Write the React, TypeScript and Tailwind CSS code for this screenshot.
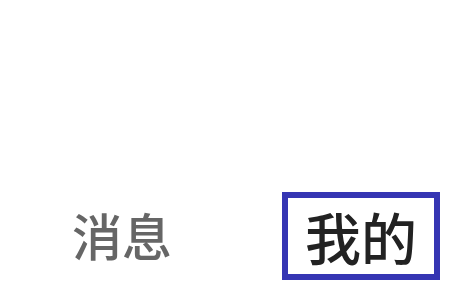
export default function App() {
  return (
    <div
      className="w-[461px] h-[284px] bg-white flex flex-col justify-end pb-[4px]"
      style={{ fontFamily: '"Noto Sans CJK SC", "Noto Sans", sans-serif' }}
    >
      <div className="flex items-center">
        {/* 消息 tab */}
        <span className="ml-[72px] mb-[4px] text-[50px] leading-none text-[#666666] font-medium">消息</span>

        {/* 我的 tab, selected */}
        <div className="ml-auto mr-[21px] w-[158px] h-[88px] border-[6px] border-[#3535b3] flex items-center justify-center">
          <span className="text-[56px] leading-none text-[#222222] font-medium">我的</span>
        </div>
      </div>
    </div>
  );
}
